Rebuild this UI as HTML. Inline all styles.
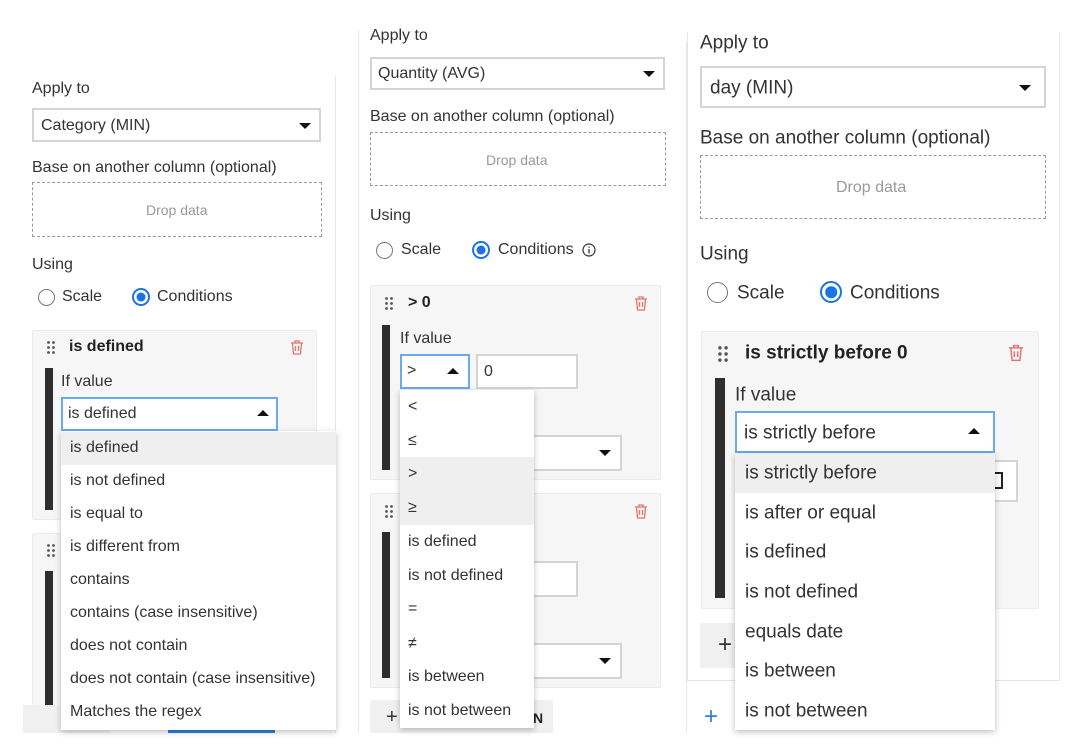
<!DOCTYPE html>
<html><head><meta charset="utf-8"><style>
*{box-sizing:border-box;margin:0;padding:0}
body{width:1089px;height:750px;background:#fff;position:relative;overflow:hidden;font-family:"Liberation Sans",sans-serif;color:#333}
.a{position:absolute}
.t{position:absolute;white-space:nowrap;line-height:1;transform:translateY(-50%)}
.sel{position:absolute;background:#fff;border:2px solid #d4d4d4}
.blue{border:2px solid #6aaaf0}
.dash{position:absolute;border:1.5px dashed #999}
.card{position:absolute;background:#f6f6f6;border:1px solid #ececec;border-radius:2px}
.bar{position:absolute;background:#2e2e2e}
.dd{position:absolute;background:#fff;box-shadow:0 2px 6px rgba(0,0,0,.25)}
.hl{position:absolute;background:#efefef}
.dn{position:absolute;width:0;height:0;border-left:6px solid transparent;border-right:6px solid transparent;border-top:6px solid #111}
.up{position:absolute;width:0;height:0;border-left:6px solid transparent;border-right:6px solid transparent;border-bottom:6px solid #111}
.rad{position:absolute;border:1.5px solid #777;border-radius:50%;background:#fff}
.radon{position:absolute;border:2px solid #1a73e8;border-radius:50%;background:#fff}
.radon::after{content:"";position:absolute;left:50%;top:50%;width:64%;height:64%;transform:translate(-50%,-50%);border-radius:50%;background:#1a73e8}
.vl{position:absolute;width:1px;background:#e6e6e6}
.gray{color:#999}
.f{font-size:16px}
.g{font-size:19px}
b{font-weight:bold;color:#222}
</style></head><body>

<svg width="0" height="0" style="position:absolute"><defs><g id="dr"><circle cx="1.5" cy="1.5" r="1.4"/><circle cx="6.5" cy="1.5" r="1.4"/><circle cx="1.5" cy="6.5" r="1.4"/><circle cx="6.5" cy="6.5" r="1.4"/><circle cx="1.5" cy="11.5" r="1.4"/><circle cx="6.5" cy="11.5" r="1.4"/></g></defs></svg>

<!-- LEFT PANEL -->
<div class="vl" style="left:335px;top:75px;height:658px"></div>
<div class="t f" style="left:32px;top:89px">Apply to</div>
<div class="sel" style="left:32px;top:108px;width:289px;height:34px"></div>
<div class="t f" style="left:41px;top:126px">Category (MIN)</div>
<div class="dn" style="left:299px;top:123px"></div>
<div class="t f" style="left:32px;top:168px">Base on another column (optional)</div>
<div class="dash" style="left:32px;top:182px;width:290px;height:55px"></div>
<div class="t gray" style="left:146px;top:210px;font-size:14px">Drop data</div>
<div class="t f" style="left:32px;top:265px">Using</div>
<div class="rad" style="left:38px;top:289px;width:17px;height:17px"></div>
<div class="t f" style="left:62px;top:297px">Scale</div>
<div class="radon" style="left:132px;top:288px;width:18px;height:18px"></div>
<div class="t f" style="left:157px;top:297px">Conditions</div>

<div class="card" style="left:32px;top:330px;width:285px;height:190px"></div>
<svg class="a" style="left:47px;top:341px" width="9" height="14" fill="#555"><use href="#dr"/></svg>
<div class="t f" style="left:69px;top:347px"><b>is defined</b></div>
<svg class="a" style="left:290px;top:340px" width="14" height="15" viewBox="0 0 14 15"><path d="M1 3h12M5 3V1h4v2M2.5 3l1 11h7l1-11M5.5 6v5M8.5 6v5" stroke="#e57373" stroke-width="1.3" fill="none"/></svg>
<div class="bar" style="left:45px;top:368px;width:8px;height:142px"></div>
<div class="t f" style="left:61px;top:382px">If value</div>
<div class="sel blue" style="left:61px;top:397px;width:217px;height:34px"></div>
<div class="t f" style="left:68px;top:414px">is defined</div>
<div class="up" style="left:257px;top:410px"></div>

<div class="card" style="left:32px;top:533px;width:285px;height:190px"></div>
<svg class="a" style="left:47px;top:544px" width="9" height="14" fill="#555"><use href="#dr"/></svg>
<div class="bar" style="left:45px;top:571px;width:8px;height:134px"></div>
<div class="a" style="left:23px;top:705px;width:87px;height:28px;background:#f0f0f0"></div>
<div class="a" style="left:168px;top:729px;width:107px;height:4px;background:#2f7de1"></div>

<div class="dd" style="left:61px;top:431px;width:275px;height:299px"></div>
<div class="hl" style="left:61px;top:432px;width:275px;height:33px"></div>
<div class="t f" style="left:70px;top:448px">is defined</div>
<div class="t f" style="left:70px;top:481px">is not defined</div>
<div class="t f" style="left:70px;top:514px">is equal to</div>
<div class="t f" style="left:70px;top:547px">is different from</div>
<div class="t f" style="left:70px;top:580px">contains</div>
<div class="t f" style="left:70px;top:613px">contains (case insensitive)</div>
<div class="t f" style="left:70px;top:646px">does not contain</div>
<div class="t f" style="left:70px;top:679px">does not contain (case insensitive)</div>
<div class="t f" style="left:70px;top:712px">Matches the regex</div>

<!-- MIDDLE PANEL -->
<div class="vl" style="left:358px;top:30px;height:703px"></div>
<div class="vl" style="left:686px;top:42px;height:691px"></div>
<div class="t f" style="left:370px;top:36px">Apply to</div>
<div class="sel" style="left:370px;top:57px;width:295px;height:33px"></div>
<div class="t f" style="left:378px;top:74px">Quantity (AVG)</div>
<div class="dn" style="left:643px;top:71px"></div>
<div class="t f" style="left:370px;top:117px">Base on another column (optional)</div>
<div class="dash" style="left:370px;top:132px;width:296px;height:54px"></div>
<div class="t gray" style="left:486px;top:160px;font-size:14px">Drop data</div>
<div class="t f" style="left:370px;top:216px">Using</div>
<div class="rad" style="left:376px;top:242px;width:17px;height:17px"></div>
<div class="t f" style="left:401px;top:250px">Scale</div>
<div class="radon" style="left:472px;top:241px;width:18px;height:18px"></div>
<div class="t f" style="left:498px;top:250px">Conditions</div>
<svg class="a" style="left:582px;top:243px" width="14" height="14" viewBox="0 0 14 14"><circle cx="7" cy="7" r="6" stroke="#333" stroke-width="1.2" fill="none"/><path d="M7 6v4.5M7 3.5v1.2" stroke="#333" stroke-width="1.3"/></svg>

<div class="card" style="left:370px;top:285px;width:291px;height:195px"></div>
<svg class="a" style="left:385px;top:297px" width="9" height="14" fill="#555"><use href="#dr"/></svg>
<div class="t f" style="left:408px;top:303px"><b>&gt; 0</b></div>
<svg class="a" style="left:634px;top:296px" width="14" height="15" viewBox="0 0 14 15"><path d="M1 3h12M5 3V1h4v2M2.5 3l1 11h7l1-11M5.5 6v5M8.5 6v5" stroke="#e57373" stroke-width="1.3" fill="none"/></svg>
<div class="bar" style="left:382px;top:325px;width:8px;height:145px"></div>
<div class="t f" style="left:400px;top:339px">If value</div>
<div class="sel blue" style="left:400px;top:354px;width:70px;height:35px"></div>
<div class="t f" style="left:407px;top:371px">&gt;</div>
<div class="up" style="left:447px;top:368px"></div>
<div class="sel" style="left:476px;top:354px;width:102px;height:35px"></div>
<div class="t f" style="left:484px;top:372px">0</div>
<div class="sel" style="left:520px;top:435px;width:102px;height:36px"></div>
<div class="dn" style="left:599px;top:450px"></div>

<div class="card" style="left:370px;top:493px;width:291px;height:195px"></div>
<svg class="a" style="left:385px;top:505px" width="9" height="14" fill="#555"><use href="#dr"/></svg>
<svg class="a" style="left:634px;top:504px" width="14" height="15" viewBox="0 0 14 15"><path d="M1 3h12M5 3V1h4v2M2.5 3l1 11h7l1-11M5.5 6v5M8.5 6v5" stroke="#e57373" stroke-width="1.3" fill="none"/></svg>
<div class="bar" style="left:382px;top:532px;width:8px;height:146px"></div>
<div class="sel" style="left:520px;top:561px;width:58px;height:36px"></div>
<div class="sel" style="left:520px;top:643px;width:102px;height:36px"></div>
<div class="dn" style="left:599px;top:658px"></div>
<div class="a" style="left:370px;top:700px;width:183px;height:33px;background:#f0f0f0"></div>
<div class="t" style="left:386px;top:717px;font-size:20px;color:#333">+</div>
<div class="t" style="left:533px;top:718px;font-size:14px"><b>N</b></div>

<div class="dd" style="left:400px;top:390px;width:134px;height:338px"></div>
<div class="hl" style="left:400px;top:457px;width:134px;height:68px"></div>
<div class="t f" style="left:408px;top:407px">&lt;</div>
<div class="t f" style="left:408px;top:441px">≤</div>
<div class="t f" style="left:408px;top:474px">&gt;</div>
<div class="t f" style="left:408px;top:508px">≥</div>
<div class="t f" style="left:408px;top:542px">is defined</div>
<div class="t f" style="left:408px;top:576px">is not defined</div>
<div class="t f" style="left:408px;top:609px">=</div>
<div class="t f" style="left:408px;top:644px">≠</div>
<div class="t f" style="left:408px;top:677px">is between</div>
<div class="t f" style="left:408px;top:711px">is not between</div>

<!-- RIGHT PANEL -->
<div class="vl" style="left:687px;top:32px;height:648px"></div>
<div class="vl" style="left:1059px;top:32px;height:648px"></div>
<div class="a" style="left:687px;top:680px;width:373px;height:1px;background:#e6e6e6"></div>
<div class="t g" style="left:700px;top:43px">Apply to</div>
<div class="sel" style="left:700px;top:66px;width:346px;height:42px"></div>
<div class="t g" style="left:710px;top:88px">day (MIN)</div>
<div class="dn" style="left:1019px;top:85px"></div>
<div class="t g" style="left:700px;top:138px">Base on another column (optional)</div>
<div class="dash" style="left:700px;top:155px;width:346px;height:64px"></div>
<div class="t gray" style="left:836px;top:188px;font-size:16px">Drop data</div>
<div class="t g" style="left:700px;top:254px">Using</div>
<div class="rad" style="left:707px;top:282px;width:21px;height:21px"></div>
<div class="t g" style="left:737px;top:293px">Scale</div>
<div class="radon" style="left:820px;top:281px;width:22px;height:22px"></div>
<div class="t g" style="left:850px;top:293px">Conditions</div>

<div class="card" style="left:701px;top:331px;width:338px;height:278px"></div>
<svg class="a" style="left:718px;top:346px" width="10" height="16" viewBox="0 0 8 13" fill="#555"><use href="#dr"/></svg>
<div class="t g" style="left:745px;top:353px"><b>is strictly before 0</b></div>
<svg class="a" style="left:1008px;top:344px" width="16" height="18" viewBox="0 0 14 15"><path d="M1 3h12M5 3V1h4v2M2.5 3l1 11h7l1-11M5.5 6v5M8.5 6v5" stroke="#e57373" stroke-width="1.3" fill="none"/></svg>
<div class="bar" style="left:715px;top:378px;width:10px;height:220px"></div>
<div class="t g" style="left:735px;top:395px">If value</div>
<div class="sel" style="left:960px;top:460px;width:58px;height:42px"></div>
<div class="a" style="left:995px;top:472px;width:8px;height:17px;border:2px solid #222;border-left:none"></div>
<div class="sel blue" style="left:735px;top:411px;width:260px;height:42px"></div>
<div class="t g" style="left:744px;top:433px">is strictly before</div>
<div class="up" style="left:968px;top:428px"></div>
<div class="a" style="left:700px;top:623px;width:60px;height:45px;background:#f0f0f0"></div>
<div class="t" style="left:718px;top:645px;font-size:24px;color:#333">+</div>
<div class="t" style="left:704px;top:717px;font-size:24px;color:#2f7de1">+</div>

<div class="dd" style="left:735px;top:453px;width:260px;height:277px"></div>
<div class="hl" style="left:735px;top:453px;width:260px;height:40px"></div>
<div class="t g" style="left:745px;top:473px">is strictly before</div>
<div class="t g" style="left:745px;top:513px">is after or equal</div>
<div class="t g" style="left:745px;top:552px">is defined</div>
<div class="t g" style="left:745px;top:592px">is not defined</div>
<div class="t g" style="left:745px;top:632px">equals date</div>
<div class="t g" style="left:745px;top:671px">is between</div>
<div class="t g" style="left:745px;top:711px">is not between</div>
</body></html>
